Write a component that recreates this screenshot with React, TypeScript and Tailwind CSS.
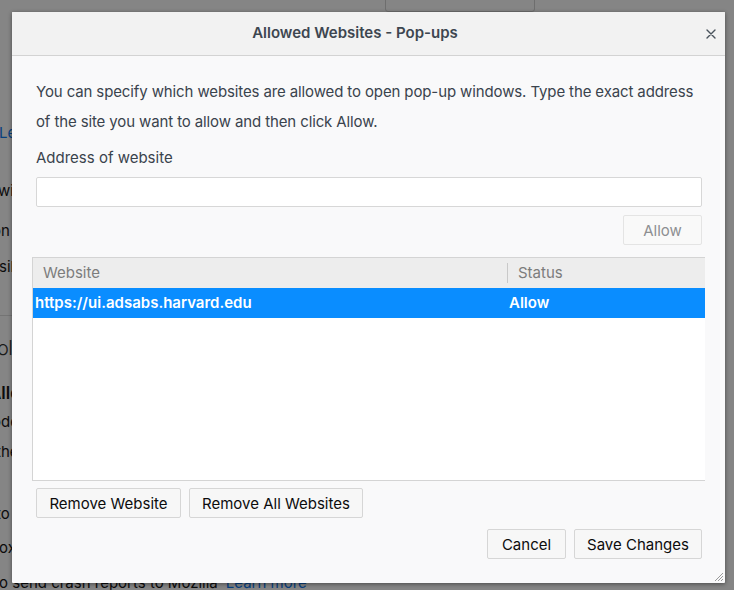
import React from "react";

const font = { fontFamily: "Inter, 'Noto Sans', sans-serif" };

function Btn({ children, disabled, className = "" }: { children: React.ReactNode; disabled?: boolean; className?: string }) {
  return (
    <button
      className={
        "h-[30px] rounded-[2px] border text-[15px] leading-none " +
        (disabled
          ? "border-[#e4e4e4] bg-[#f9f9f9] text-[#8d8f92] "
          : "border-[#d6d6d6] bg-[#f7f7f7] text-[#0c0c0d] ") +
        className
      }
    >
      {children}
    </button>
  );
}

export default function App() {
  return (
    <div className="relative h-[590px] w-[734px] overflow-hidden bg-[#858585]" style={font}>
      {/* dimmed underlying page */}
      <div className="absolute left-[385px] top-[-10px] h-[22px] w-[150px] rounded-[3px] border border-[#6e6e6e]" />
      <div className="absolute left-0 top-0 h-[575px] w-[12px] overflow-hidden whitespace-nowrap">
        <div className="absolute left-[-1px] top-[122px] text-[15px] text-[#073f7e]">Learn more</div>
        <div className="absolute left-[-2px] top-[180px] text-[15px] text-[#0c0c0c]">with</div>
        <div className="absolute left-[-8px] top-[220px] text-[15px] text-[#0c0c0c]">on</div>
        <div className="absolute left-[-1px] top-[256px] text-[15px] text-[#0c0c0c]">sible</div>
        <div className="absolute left-0 top-[315px] h-px w-[12px] bg-[#747474]" />
        <div className="absolute left-[-3px] top-[333px] text-[20px] font-light tracking-[-0.5px] text-[#1a1a1a]">oll</div>
        <div className="absolute left-[-11px] top-[381px] text-[17px] font-semibold text-[#0c0c0c]">Alle</div>
        <div className="absolute left-[-8px] top-[411px] text-[15px] text-[#0c0c0c]">ode</div>
        <div className="absolute left-[-4px] top-[441px] text-[15px] text-[#0c0c0c]">the</div>
        <div className="absolute left-[-4px] top-[503px] text-[15px] text-[#0c0c0c]">to</div>
        <div className="absolute left-[-1px] top-[537px] text-[15px] text-[#0c0c0c]">ox</div>
      </div>
      <div className="absolute left-[-1px] top-[572px] flex gap-[8px] whitespace-nowrap text-[15px] text-[#0c0c0c]">
        <span>o send crash reports to Mozilla</span>
        <span className="text-[#073f7e]">Learn more</span>
      </div>

      {/* dialog */}
      <div className="absolute left-[12px] top-[12px] flex h-[571px] w-[713px] flex-col overflow-hidden rounded-[1px] bg-[#f9f9fa] shadow-[0_1px_4px_rgba(0,0,0,0.45)]">
        <div className="relative flex h-[44px] shrink-0 items-center justify-center border-b border-[#d3d3d3] bg-[#f2f2f2]">
          <span className="mr-[27px] text-[15px] font-semibold text-[#3d4650]">Allowed Websites - Pop-ups</span>
          <svg className="absolute right-[9px] top-[17px]" width="10" height="10" viewBox="0 0 10 10">
            <path d="M1 1L9 9M9 1L1 9" stroke="#4a535c" strokeWidth="1.4" strokeLinecap="round" />
          </svg>
        </div>

        <div className="flex flex-1 flex-col px-[23px] pl-[24px] pt-[21px]">
          <p className="text-[15px] leading-[30px] tracking-[-0.12px] text-[#3a434d]">
            You can specify which websites are allowed to open pop-up windows. Type the exact address of the site you want to allow and then click Allow.
          </p>
          <div className="mt-[11px] text-[15px] leading-[20px] text-[#3a434d]">Address of website</div>
          <div className="mt-[9px] h-[30px] rounded-[2px] border border-[#d7d7d7] bg-white" />
          <div className="mt-[8px] flex justify-end">
            <Btn disabled className="w-[79px]">Allow</Btn>
          </div>

          <div className="mx-[-4px] mr-[-3px] mt-[12px] flex h-[224px] flex-col border-y border-l border-[#d4d4d4] bg-white">
            <div className="flex h-[30px] shrink-0 items-center bg-[#ededed] text-[15px] text-[#7c7c7c]">
              <div className="w-[474px] pl-[10px]">Website</div>
              <div className="h-[20px] w-px bg-[#c9c9c9]" />
              <div className="pl-[10px]">Status</div>
            </div>
            <div className="flex h-[30px] shrink-0 items-center bg-[#0a8dff] text-[15px] font-semibold text-white">
              <div className="w-[475px] pl-[2px]">https://ui.adsabs.harvard.edu</div>
              <div className="pl-[1px]">Allow</div>
            </div>
          </div>

          <div className="mt-[7px] flex gap-[8px]">
            <Btn className="w-[145px]">Remove Website</Btn>
            <Btn className="w-[174px]">Remove All Websites</Btn>
          </div>
          <div className="mt-[11px] flex justify-end gap-[8px]">
            <Btn className="w-[79px]">Cancel</Btn>
            <Btn className="w-[128px]">Save Changes</Btn>
          </div>
        </div>

        <svg className="absolute bottom-[1px] right-[1px]" width="11" height="11" viewBox="0 0 11 11">
          <path d="M10 2L2 10M10 5L5 10M10 8L8 10" stroke="#9a9a9a" strokeWidth="1" />
        </svg>
      </div>
    </div>
  );
}
